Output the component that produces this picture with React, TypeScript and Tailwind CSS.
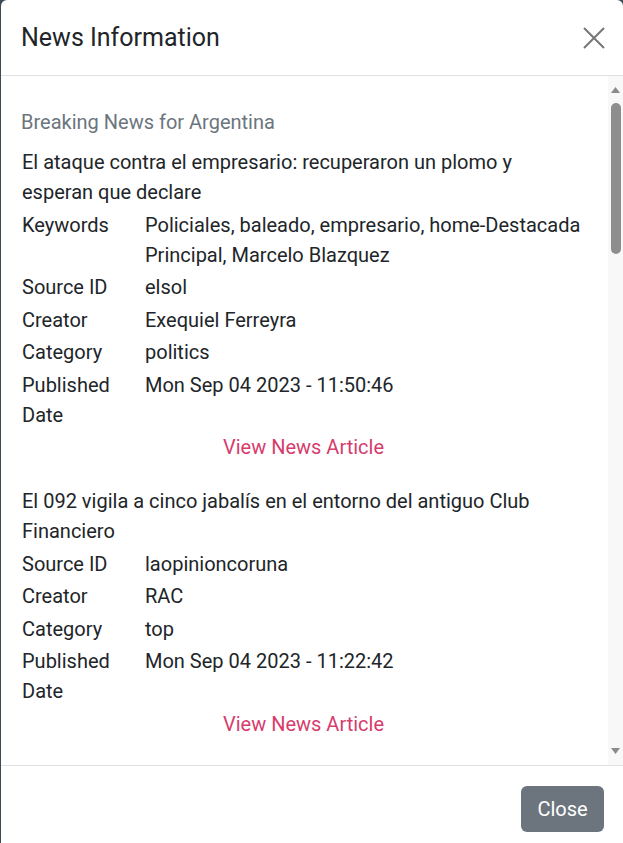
type NewsItem = {
  title: string;
  keywords?: string;
  sourceId: string;
  creator: string;
  category: string;
  published: string;
};

const news: NewsItem[] = [
  {
    title: 'El ataque contra el empresario: recuperaron un plomo y esperan que declare',
    keywords: 'Policiales, baleado, empresario, home-Destacada Principal, Marcelo Blazquez',
    sourceId: 'elsol',
    creator: 'Exequiel Ferreyra',
    category: 'politics',
    published: 'Mon Sep 04 2023 - 11:50:46',
  },
  {
    title: 'El 092 vigila a cinco jabalís en el entorno del antiguo Club Financiero',
    sourceId: 'laopinioncoruna',
    creator: 'RAC',
    category: 'top',
    published: 'Mon Sep 04 2023 - 11:22:42',
  },
];

function Row({ label, value }: { label: string; value: string }) {
  return (
    <div className="flex">
      <div className="w-[123px] shrink-0">{label}</div>
      <div className="flex-1">{value}</div>
    </div>
  );
}

// drawn scrollbar, the page is shot without native ones
function Scrollbar() {
  return (
    <div className="flex w-[15px] shrink-0 flex-col items-center bg-[#f8f8f8] pt-[11px] pb-[11px]">
      <svg width="9" height="6" viewBox="0 0 9 6">
        <path d="M4.5 0 L9 6 L0 6 Z" fill="#8a8a8a" />
      </svg>
      <div className="mt-[10px] h-[151px] w-[10px] rounded-full bg-[#8e8e8e]" />
      <div className="flex-1" />
      <svg width="9" height="6" viewBox="0 0 9 6">
        <path d="M0 0 L9 0 L4.5 6 Z" fill="#8a8a8a" />
      </svg>
    </div>
  );
}

export default function App() {
  return (
    <div className="h-[843px] overflow-hidden bg-[#3d4b55] pl-px font-['Roboto',sans-serif] text-[#212529]">
      <div className="flex h-full flex-col rounded-t-md bg-white">
        {/* header */}
        <div className="flex h-[76px] shrink-0 items-center justify-between border-b border-[#dee2e6] pl-5 pr-[18px]">
          <h5 className="text-[25px] leading-[1.2]">News Information</h5>
          <svg width="22" height="22" viewBox="0 0 22 22" className="mt-px">
            <path d="M1 1 L21 21 M21 1 L1 21" stroke="#767676" strokeWidth="2" />
          </svg>
        </div>

        {/* body */}
        <div className="flex h-[689px] shrink-0">
          <div className="flex-1 overflow-hidden pt-[31px] pl-5 pr-[23px] text-[20px] leading-[30px]">
            <div className="mb-2.5 text-[#6c757d]">Breaking News for Argentina</div>
            {news.map((n) => (
              <div key={n.title} className="mb-6 flex flex-col gap-[2.5px] pl-px">
                <div>{n.title}</div>
                {n.keywords && <Row label="Keywords" value={n.keywords} />}
                <Row label="Source ID" value={n.sourceId} />
                <Row label="Creator" value={n.creator} />
                <Row label="Category" value={n.category} />
                <Row label="Published Date" value={n.published} />
                <div className="text-center">
                  <a className="text-[#d63c6d]">View News Article</a>
                </div>
              </div>
            ))}
          </div>
          <Scrollbar />
        </div>

        {/* footer */}
        <div className="flex shrink-0 justify-end border-t border-[#dee2e6] pt-5 pr-[19px]">
          <button className="h-[46px] w-[83px] rounded-md bg-[#6c757d] text-[20px] text-white">Close</button>
        </div>
      </div>
    </div>
  );
}
